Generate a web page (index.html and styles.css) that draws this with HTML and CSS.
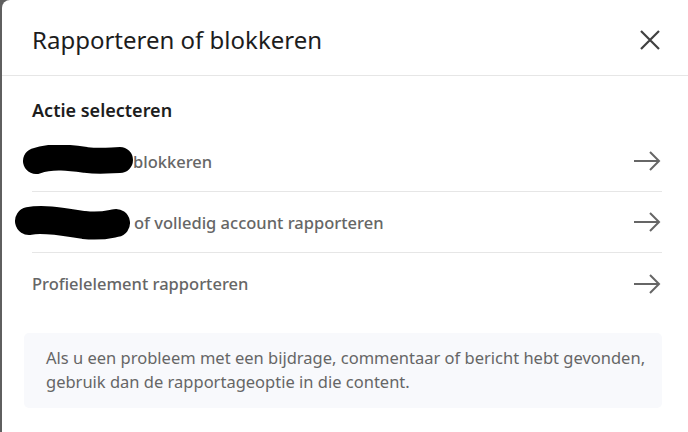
FILE: index.html
```html
<!DOCTYPE html>
<html lang="nl">
<head>
<meta charset="utf-8">
<link rel="stylesheet" href="styles.css">
</head>
<body>
<div class="modal">
  <header class="modal-header">
    <h2 class="modal-title">Rapporteren of blokkeren</h2>
    <button class="close" aria-label="Sluiten">
      <svg width="24" height="24" viewBox="0 0 24 24"><path d="M3 3 L21 21 M21 3 L3 21" stroke="#404040" stroke-width="2.2" fill="none"/></svg>
    </button>
  </header>
  <section class="modal-body">
    <h3 class="section-title">Actie selecteren</h3>
    <ul class="actions">
      <li class="action">
        <span class="label"><svg class="redact r1" width="112" height="34" viewBox="0 0 112 34"><path d="M14 16 C30 10 50 13 64 15 C80 17 90 15 98 15" stroke="#000" stroke-width="26" stroke-linecap="round" fill="none"/></svg>blokkeren</span>
        <svg class="arrow" width="28" height="22" viewBox="0 0 28 22"><path d="M1 11 H26 M17 2 L26 11 L17 20" stroke="#666" stroke-width="2" fill="none"/></svg>
      </li>
      <li class="action">
        <span class="label"><svg class="redact r2" width="118" height="38" viewBox="0 0 118 38"><path d="M15 17 C30 14 50 18 70 21 C88 23 96 20 102 19" stroke="#000" stroke-width="28" stroke-linecap="round" fill="none"/></svg>of volledig account rapporteren</span>
        <svg class="arrow" width="28" height="22" viewBox="0 0 28 22"><path d="M1 11 H26 M17 2 L26 11 L17 20" stroke="#666" stroke-width="2" fill="none"/></svg>
      </li>
      <li class="action">
        <span class="label">Profielelement rapporteren</span>
        <svg class="arrow" width="28" height="22" viewBox="0 0 28 22"><path d="M1 11 H26 M17 2 L26 11 L17 20" stroke="#666" stroke-width="2" fill="none"/></svg>
      </li>
    </ul>
    <div class="info">
      <p>Als u een probleem met een bijdrage, commentaar of bericht hebt gevonden, gebruik dan de rapportageoptie in die content.</p>
    </div>
  </section>
</div>
</body>
</html>
```

FILE: styles.css
```css
* { box-sizing: border-box; }
html, body { margin: 0; padding: 0; }
body {
  background: #5f5f5f;
  font-family: "Noto Sans", "Open Sans", sans-serif;
  width: 688px;
  height: 432px;
  overflow: hidden;
}
.modal {
  margin-left: 2px;
  height: 432px;
  background: #fff;
  border-top-left-radius: 8px;
}
.modal-header {
  height: 76px;
  display: flex;
  align-items: center;
  justify-content: space-between;
  padding: 4px 26px 0 30px;
  border-bottom: 1px solid #e6e6e6;
}
.modal-title {
  margin: 0;
  font-size: 24px;
  font-weight: 400;
  color: #1d1d1d;
  line-height: 32px;
}
.close {
  border: 0;
  background: none;
  padding: 0;
  width: 24px;
  height: 24px;
  display: flex;
}
.modal-body {
  padding: 0 26px 0 22px;
}
.section-title {
  margin: 0 0 0 8px;
  padding-top: 22px;
  font-size: 18px;
  font-weight: 600;
  color: #1d1d1d;
  line-height: 24px;
}
.actions {
  list-style: none;
  margin: 9px 0 0 8px;
  padding: 0;
}
.action {
  height: 61px;
  display: flex;
  align-items: center;
  justify-content: space-between;
  border-bottom: 1px solid #e6e6e6;
}
.action:last-child { border-bottom: 0; }
.label {
  display: flex;
  align-items: center;
  font-size: 16.5px;
  font-weight: 500;
  color: #666;
  line-height: 24px;
  padding-top: 1px;
}
.redact { flex: none; }
.r1 { margin-left: -10px; margin-right: -1px; }
.r2 { margin-left: -18px; margin-right: 2px; }
.arrow { flex: none; margin-right: 1px; }
.info {
  margin-top: 19px;
  background: #f8f9fc;
  border-radius: 5px;
  padding: 13px 16px 14px 22px;
}
.info p {
  margin: 0;
  font-size: 16.5px;
  line-height: 24px;
  color: #666;
}
```
